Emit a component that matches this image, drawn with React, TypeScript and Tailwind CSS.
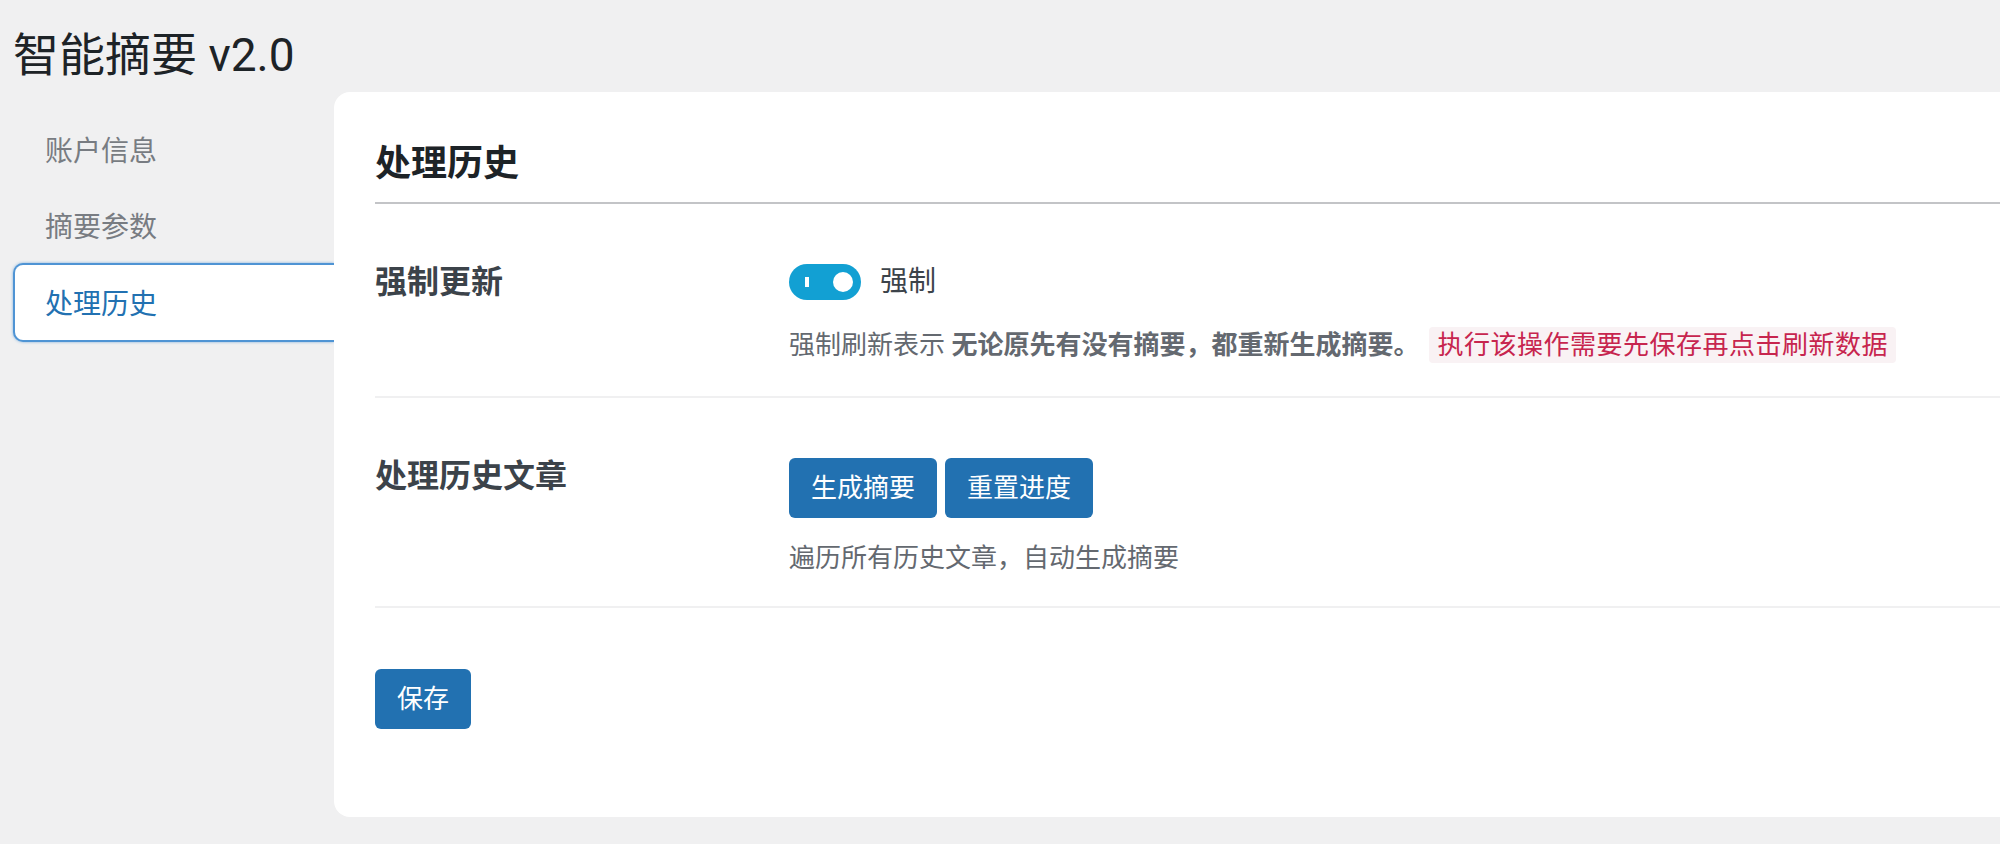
import React from "react";

const font = { fontFamily: 'Roboto, "Noto Sans CJK SC", sans-serif' };

export default function App() {
  return (
    <div
      className="min-h-[844px] w-[2000px] overflow-hidden bg-[#f0f0f1] pt-[25px] pl-[13px]"
      style={font}
    >
      <h1 className="text-[46px] leading-[60px] text-[#1d2327] font-normal mb-[7px]">
        智能摘要 v2.0
      </h1>
      <div className="flex items-start">
        <nav className="w-[321px] shrink-0 pt-[42px] text-[28px]">
          <div className="pl-[32px] leading-[36px] text-[#787c82]">账户信息</div>
          <div className="pl-[32px] mt-[40px] leading-[36px] text-[#787c82]">摘要参数</div>
          <div className="mt-[17px] h-[79px] bg-white border-2 border-r-0 border-[#4f94d4] rounded-l-[10px] shadow-[0_0_3px_rgba(79,148,212,0.7)] pl-[30px] pt-[22px] leading-[36px] text-[#2271b1]">
            处理历史
          </div>
        </nav>
        <main className="flex-1 h-[725px] bg-white rounded-l-[16px] pl-[41px] pt-[50px] relative z-10">
          <div className="border-b-2 border-[#c3c4c7] pb-[16px]">
            <h2 className="text-[36px] leading-[44px] font-bold text-[#1d2327]">处理历史</h2>
          </div>

          <div className="flex border-b-2 border-[#f0f0f1] pt-[60px] pb-[33px]">
            <div className="w-[414px] shrink-0 text-[32px] leading-[36px] font-bold text-[#3c434a]">
              强制更新
            </div>
            <div>
              <div className="flex items-center h-[36px]">
                <div className="relative w-[72px] h-[36px] rounded-full bg-[#12a0d3]">
                  <span className="absolute left-[16px] top-[13px] w-[4px] h-[10px] bg-white" />
                  <span className="absolute right-[8px] top-[8px] w-[20px] h-[20px] rounded-full bg-white" />
                </div>
                <span className="ml-[19px] text-[28px] text-[#3c434a]">强制</span>
              </div>
              <div className="mt-[27px] flex items-center h-[36px] text-[26px] text-[#646970]">
                <span>
                  强制刷新表示 <b className="font-bold">无论原先有没有摘要，都重新生成摘要。</b>
                </span>
                <span className="ml-[10px] h-[36px] flex items-center px-[8px] bg-[#f9f2f4] text-[#c7254e] tracking-[0.5px] rounded-[4px]">
                  执行该操作需要先保存再点击刷新数据
                </span>
              </div>
            </div>
          </div>

          <div className="flex border-b-2 border-[#f0f0f1] pt-[60px] pb-[30px]">
            <div className="w-[414px] shrink-0 text-[32px] leading-[36px] font-bold text-[#3c434a]">
              处理历史文章
            </div>
            <div>
              <div className="flex gap-[8px]">
                <button className="h-[60px] px-[22px] rounded-[6px] bg-[#2271b1] text-white text-[26px]">
                  生成摘要
                </button>
                <button className="h-[60px] px-[22px] rounded-[6px] bg-[#2271b1] text-white text-[26px]">
                  重置进度
                </button>
              </div>
              <div className="mt-[22px] text-[26px] leading-[36px] text-[#646970]">
                遍历所有历史文章，自动生成摘要
              </div>
            </div>
          </div>

          <button className="mt-[61px] h-[60px] px-[22px] rounded-[6px] bg-[#2271b1] text-white text-[26px]">
            保存
          </button>
        </main>
      </div>
    </div>
  );
}
